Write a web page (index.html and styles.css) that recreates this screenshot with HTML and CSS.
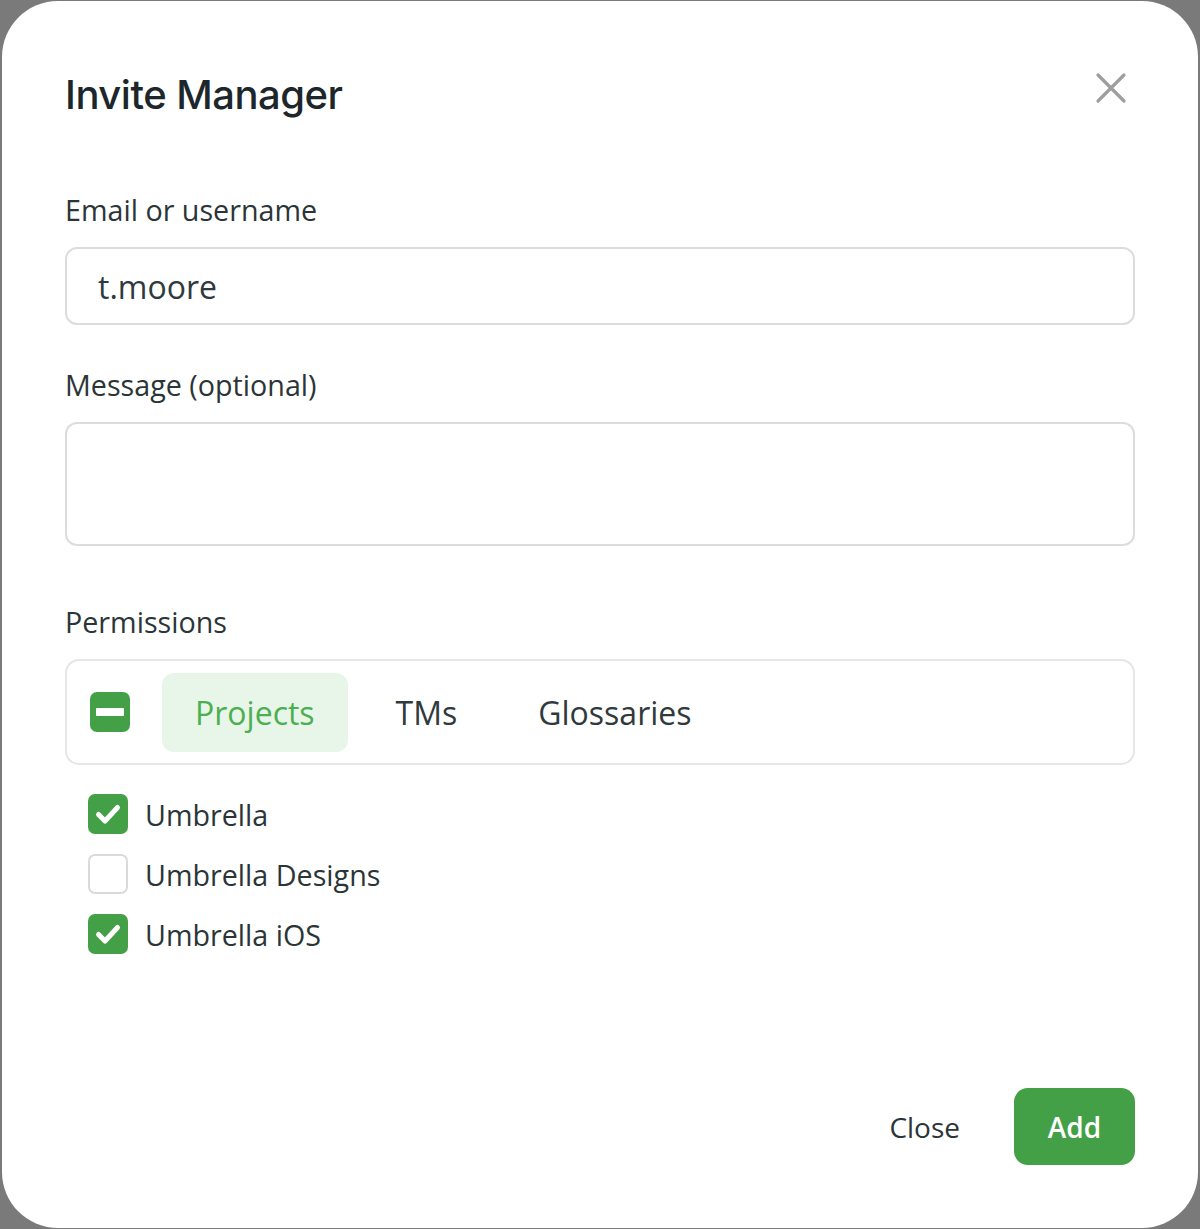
FILE: index.html
```html
<!DOCTYPE html>
<html lang="en">
<head>
    <meta charset="UTF-8">
    <meta name="viewport" content="width=device-width, initial-scale=1.0">
    <title>Invite Manager</title>
    <link rel="stylesheet" href="styles.css">
</head>
<body>
    <div class="modal">
        <div class="modal-header">
            <h1>Invite Manager</h1>
            <button class="close-x" type="button" aria-label="Close">
                <svg width="32" height="32" viewBox="0 0 32 32">
                    <path d="M3 3 L29 29 M29 3 L3 29" stroke="#9e9e9e" stroke-width="3.2" stroke-linecap="round"/>
                </svg>
            </button>
        </div>

        <form id="invite-form">
            <label class="field-label" for="username">Email or username</label>
            <input class="text-input" type="text" id="username" name="username" value="t.moore">

            <label class="field-label" for="message">Message (optional)</label>
            <textarea class="text-area" id="message" name="message"></textarea>

            <div class="field-label perm-label">Permissions</div>
            <div class="tabs-box">
                <span class="check check-partial"><span class="bar"></span></span>
                <div class="tab active">Projects</div>
                <div class="tab">TMs</div>
                <div class="tab">Glossaries</div>
            </div>

            <ul class="project-list">
                <li>
                    <span class="check check-on">
                        <svg width="30" height="30" viewBox="0 0 30 30"><path d="M5.5 15.5 L12 22 L24.5 8.5" fill="none" stroke="#fff" stroke-width="5" stroke-linecap="round" stroke-linejoin="round"/></svg>
                    </span>
                    Umbrella
                </li>
                <li>
                    <span class="check check-off"></span>
                    Umbrella Designs
                </li>
                <li>
                    <span class="check check-on">
                        <svg width="30" height="30" viewBox="0 0 30 30"><path d="M5.5 15.5 L12 22 L24.5 8.5" fill="none" stroke="#fff" stroke-width="5" stroke-linecap="round" stroke-linejoin="round"/></svg>
                    </span>
                    Umbrella iOS
                </li>
            </ul>
        </form>

        <div class="modal-footer">
            <button class="btn-text" type="button">Close</button>
            <button class="btn-primary" type="submit" form="invite-form">Add</button>
        </div>
    </div>
</body>
</html>
```

FILE: styles.css
```css
* {
    box-sizing: border-box;
}
body {
    margin: 0;
    padding: 0;
    background-color: #7a7a7a;
    font-family: "Open Sans", "Noto Sans", Arial, sans-serif;
    color: #2f3a3d;
}
.modal {
    width: 1196px;
    height: 1227px;
    margin: 1px 2px;
    background-color: #fff;
    border-radius: 56px;
    padding: 62px 63px 63px 63px;
    display: flex;
    flex-direction: column;
}
.modal-header {
    display: flex;
    justify-content: space-between;
    align-items: center;
    height: 62px;
}
.modal-header h1 {
    margin: 0;
    font-family: Inter, "Open Sans", sans-serif;
    font-weight: 500;
    font-size: 40px;
    letter-spacing: -0.5px;
    color: #1d272b;
}
.close-x {
    background: none;
    border: none;
    padding: 0;
    margin-right: 8px;
    margin-top: -12px;
    cursor: pointer;
    display: flex;
}
form {
    display: flex;
    flex-direction: column;
}
.field-label {
    display: block;
    font-size: 28.7px;
    line-height: 36px;
    margin-top: 67px;
    margin-bottom: 19px;
    color: #2b3538;
}
.text-input {
    height: 78px;
    width: 100%;
    border: 2px solid #dcdcdc;
    border-radius: 12px;
    padding: 0 31px;
    font-family: "Open Sans", sans-serif;
    font-size: 32px;
    color: #2f3a3d;
    outline: none;
}
.text-area {
    height: 124px;
    width: 100%;
    border: 2px solid #dcdcdc;
    border-radius: 12px;
    resize: none;
    outline: none;
}
#message {
    font-size: 28px;
}
.text-input + .field-label {
    margin-top: 42px;
}
.perm-label {
    margin-top: 58px;
}
.tabs-box {
    height: 106px;
    border: 2px solid #e6e6e6;
    border-radius: 14px;
    display: flex;
    align-items: center;
    padding: 0 23px;
    gap: 15px;
}
.check {
    width: 40px;
    height: 40px;
    border-radius: 7px;
    display: flex;
    align-items: center;
    justify-content: center;
    flex-shrink: 0;
}
.check-partial {
    background-color: #43a047;
    margin-right: 17px;
}
.check-partial .bar {
    width: 28px;
    height: 8px;
    background: #fff;
    border-radius: 1px;
}
.check-on {
    background-color: #43a047;
}
.check-off {
    border: 2px solid #dadada;
    background: #fff;
}
.tab {
    height: 79px;
    padding: 0 33px;
    border-radius: 12px;
    display: flex;
    align-items: center;
    font-size: 32px;
    color: #2f3a3d;
}
.tab.active {
    background-color: #e8f5e9;
    color: #4caf50;
}
.project-list {
    list-style: none;
    margin: 29px 0 0;
    padding: 0 0 0 23px;
    display: flex;
    flex-direction: column;
    gap: 20px;
}
.project-list li {
    display: flex;
    align-items: center;
    gap: 17px;
    height: 40px;
    font-size: 28.7px;
    color: #2b3538;
}
.modal-footer {
    margin-top: auto;
    display: flex;
    justify-content: flex-end;
    align-items: center;
    gap: 26px;
}
.btn-text {
    background: none;
    border: none;
    font-family: "Open Sans", sans-serif;
    font-size: 28px;
    color: #2b3538;
    padding: 0 28px;
    cursor: pointer;
}
.btn-primary {
    width: 121px;
    height: 77px;
    background-color: #43a047;
    border: none;
    border-radius: 14px;
    color: #fff;
    font-family: "Open Sans", sans-serif;
    font-size: 28px;
    font-weight: 600;
    cursor: pointer;
}
```
